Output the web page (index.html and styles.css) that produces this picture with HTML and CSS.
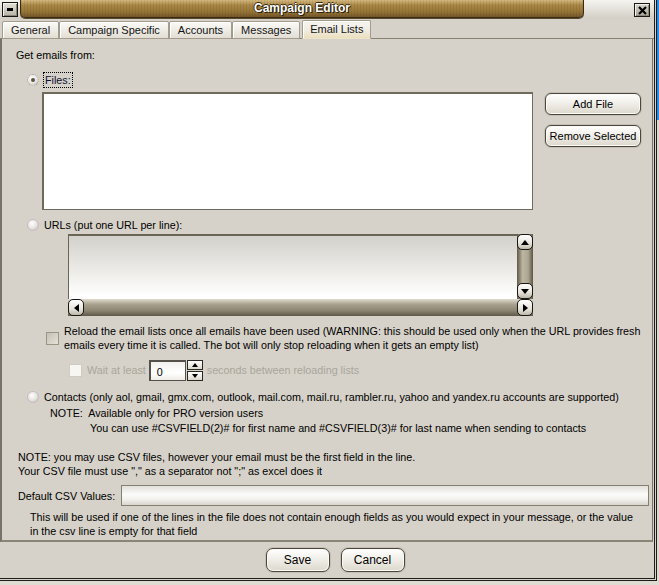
FILE: index.html
```html
<!DOCTYPE html>
<html lang="en">
<head>
    <meta charset="UTF-8">
    <title>Campaign Editor</title>
    <link rel="stylesheet" href="styles.css">
</head>
<body>
<div class="desktop">
    <div class="window">
        <div class="titlebar">
            <div class="sys-btn"><span class="dash"></span></div>
            <div class="caption">Campaign Editor</div>
            <div class="caption-end">
                <div class="close-btn">
                    <svg width="9" height="9" viewBox="0 0 9 9"><path d="M1 1L8 8M8 1L1 8" stroke="#000" stroke-width="2.2"/></svg>
                </div>
            </div>
        </div>

        <div class="tabs">
            <div class="tab">General</div>
            <div class="tab">Campaign Specific</div>
            <div class="tab">Accounts</div>
            <div class="tab">Messages</div>
            <div class="tab active">Email Lists</div>
        </div>

        <div class="panel">
            <div class="get-from">Get emails from:</div>

            <div class="option files-option">
                <span class="radio checked"></span>
                <span class="focus-label">Files:</span>
            </div>

            <div class="files-row">
                <div class="listbox"></div>
                <div class="side-buttons">
                    <button class="btn">Add File</button>
                    <button class="btn">Remove Selected</button>
                </div>
            </div>

            <div class="option urls-option">
                <span class="radio"></span>
                <span>URLs (put one URL per line):</span>
            </div>

            <div class="url-box">
                <div class="url-main">
                    <div class="url-text"></div>
                    <div class="vscroll">
                        <div class="sb-btn"><span class="arrow up"></span></div>
                        <div class="sb-btn"><span class="arrow down"></span></div>
                    </div>
                </div>
                <div class="hscroll">
                    <div class="sb-btn"><span class="arrow left"></span></div>
                    <div class="sb-btn"><span class="arrow right"></span></div>
                </div>
            </div>

            <div class="reload-row">
                <span class="checkbox"></span>
                <p>Reload the email lists once all emails have been used (WARNING: this should be used only when the URL provides fresh<br>emails every time it is called. The bot will only stop reloading when it gets an empty list)</p>
            </div>

            <div class="wait-row">
                <span class="checkbox disabled"></span>
                <span class="muted">Wait at least</span>
                <div class="spin-input">0</div>
                <div class="spin-buttons">
                    <div class="spin-btn"><span class="arrow up small"></span></div>
                    <div class="spin-btn"><span class="arrow down small"></span></div>
                </div>
                <span class="muted">seconds between reloading lists</span>
            </div>

            <div class="option contacts-option">
                <span class="radio"></span>
                <span>Contacts (only aol, gmail, gmx.com, outlook, mail.com, mail.ru, rambler.ru, yahoo and yandex.ru accounts are supported)</span>
            </div>
            <div class="note">NOTE:&nbsp; Available only for PRO version users</div>
            <div class="note-sub">You can use #CSVFIELD(2)# for first name and #CSVFIELD(3)# for last name when sending to contacts</div>

            <div class="csv-note">NOTE: you may use CSV files, however your email must be the first field in the line.<br>Your CSV file must use "," as a separator not ";" as excel does it</div>

            <div class="csv-row">
                <label>Default CSV Values:</label>
                <div class="text-input"></div>
            </div>

            <div class="csv-help">This will be used if one of the lines in the file does not contain enough fields as you would expect in your message, or the value<br>in the csv line is empty for that field</div>
        </div>

        <div class="button-bar">
            <button class="btn">Save</button>
            <button class="btn">Cancel</button>
        </div>
    </div>
    <div class="side-strip"></div>
</div>
</body>
</html>
```

FILE: styles.css
```css
* {
    margin: 0;
    padding: 0;
    box-sizing: border-box;
}

body {
    width: 659px;
    height: 585px;
    overflow: hidden;
    background: #dedbd3;
    font-family: "Liberation Sans", Arial, sans-serif;
    font-size: 10.75px;
    line-height: 14px;
    color: #000;
    white-space: nowrap;
}

.desktop {
    display: flex;
}

.window {
    width: 657px;
    height: 581px;
    background: #d6d2c9;
    border-right: 3px double #1d1c18;
    border-bottom: 3px double #1d1c18;
}

.side-strip {
    width: 2px;
    height: 585px;
    background: linear-gradient(#1d8ff2 0, #1d8ff2 120px, #dedbd3 120px);
}

/* Title bar */
.titlebar {
    height: 19px;
    display: flex;
    background: linear-gradient(#f5f4f0, #d2cec5);
}

.sys-btn {
    width: 16px;
    height: 15px;
    margin: 2px 0 0 2px;
    border: 1px solid #1a1814;
    box-shadow: inset 1px 1px 0 #f4f2ec, inset -1px -1px 0 #8a867c;
    background: linear-gradient(#e4e1d9, #b7b3a8);
    display: flex;
    align-items: center;
    justify-content: center;
}

.sys-btn .dash {
    width: 6px;
    height: 3px;
    background: #000;
}

.caption {
    flex: 1;
    height: 18px;
    margin-left: 2px;
    border: 1px solid #3a2c12;
    border-top: none;
    border-radius: 0 0 5px 5px;
    background:
        repeating-linear-gradient(90deg, rgba(0, 0, 0, 0.07) 0 1px, transparent 1px 3px),
        linear-gradient(#d5b97f 0%, #a98846 30%, #967436 70%, #74572a 100%);
    box-shadow: 0 1px 0 #5a4a2e;
    color: #fff;
    font-weight: bold;
    font-size: 12px;
    line-height: 17px;
    text-align: center;
    text-shadow: 1px 1px 0 #2a1e08, -1px 0 0 #3a2a10, 0 -1px 0 #3a2a10;
}

.caption-end {
    width: 70px;
    display: flex;
    justify-content: flex-end;
    padding: 3px 4px 0 0;
}

.close-btn {
    width: 16px;
    height: 14px;
    border: 1px solid #1a1814;
    box-shadow: inset 1px 1px 0 #f4f2ec, inset -1px -1px 0 #8a867c;
    background: linear-gradient(#d8d5cc, #a9a599);
    display: flex;
    align-items: center;
    justify-content: center;
}

/* Tabs */
.tabs {
    height: 20px;
    display: flex;
    align-items: flex-end;
    padding-left: 2px;
    border-bottom: 1px solid #888272;
}

.tab {
    height: 18px;
    margin-bottom: -1px;
    padding: 0 8px;
    border: 1px solid #a29c8e;
    border-radius: 2px 2px 0 0;
    background: linear-gradient(#fbfaf7, #e2ded4);
    box-shadow: inset 1px 1px 0 #fff;
    font-size: 11px;
    line-height: 16px;
    color: #141414;
}

.tab.active {
    height: 19px;
    margin-left: 2px;
    padding: 0 7px;
    border-bottom-color: #ece3c8;
    background: linear-gradient(#f6f5f0, #efece2 55%, #ebdfbd);
    line-height: 17px;
}

/* Panel */
.panel {
    width: 653px;
    height: 503px;
    border-left: 2px solid #77736a;
    border-right: 1px solid #77736a;
    border-bottom: 2px solid #8a8577;
    padding-top: 9px;
}

.get-from {
    padding-left: 14px;
}

.option {
    display: flex;
    align-items: center;
    gap: 5px;
    padding-left: 25px;
    height: 14px;
}

.files-option {
    margin-top: 11px;
}

.radio {
    width: 12px;
    height: 12px;
    border-radius: 50%;
    border: 1px solid #c8b9c8;
    background: radial-gradient(circle at 40% 35%, #ffffff, #e6e3dc 55%, #b9b5ab);
    display: inline-flex;
    align-items: center;
    justify-content: center;
}

.radio.checked {
    border: 1px dotted #a59f8f;
}

.radio.checked::after {
    content: "";
    width: 4px;
    height: 4px;
    border-radius: 50%;
    background: #5a554a;
}

.focus-label {
    outline: 1px dotted #000;
    outline-offset: 0;
    padding: 0 1px;
    color: #0c1030;
}

.files-row {
    display: flex;
    margin-top: 5px;
    padding-left: 40px;
}

.listbox {
    width: 491px;
    height: 118px;
    background: #fff;
    border: 1px solid #6f6a5e;
    border-width: 2px 1px 1px 2px;
}

.side-buttons {
    display: flex;
    flex-direction: column;
    gap: 10px;
    margin: 1px 0 0 12px;
}

.btn {
    font-family: inherit;
    font-size: 11px;
    color: #000;
    height: 22px;
    width: 96px;
    border: 1px solid #4b473e;
    border-radius: 6px;
    background: linear-gradient(#ffffff, #f1efe9 45%, #dcd8cd 100%);
    box-shadow: inset 0 0 0 1px #fbfaf6, 0 0 0 1px #c4bfb2;
}

.urls-option {
    margin-top: 8px;
}

.url-box {
    width: 465px;
    height: 82px;
    margin: 2px 0 0 66px;
    display: flex;
    flex-direction: column;
}

.url-main {
    flex: 1;
    display: flex;
}

.url-text {
    flex: 1;
    border-top: 2px solid #6b6555;
    border-left: 1px solid #6b6555;
    background: linear-gradient(#d3d1cb, #ecebe7 55%, #ffffff 95%);
}

.vscroll {
    width: 16px;
    display: flex;
    flex-direction: column;
    justify-content: space-between;
    background: linear-gradient(90deg, #5e5746, #bcb6a2 35%, #aca590 70%, #5b5443);
}

.hscroll {
    height: 17px;
    display: flex;
    justify-content: space-between;
    background: linear-gradient(#e0dccf, #aaa390 30%, #8a8370 70%, #5f5848);
}

.sb-btn {
    width: 16px;
    height: 16px;
    border: 1px solid #1a1814;
    border-radius: 5px;
    background: linear-gradient(#ffffff, #e6e3da 60%, #bdb8ab);
    display: flex;
    align-items: center;
    justify-content: center;
}

.hscroll .sb-btn {
    height: 17px;
}

.arrow {
    width: 0;
    height: 0;
    border: 4px solid transparent;
}

.arrow.up {
    border-bottom: 5px solid #000;
    border-top-width: 0;
}

.arrow.down {
    border-top: 5px solid #000;
    border-bottom-width: 0;
}

.arrow.left {
    border-right: 5px solid #000;
    border-left-width: 0;
}

.arrow.right {
    border-left: 5px solid #000;
    border-right-width: 0;
}

.arrow.small {
    border-width: 3px;
}

.arrow.small.up {
    border-bottom-width: 4px;
    border-top-width: 0;
}

.arrow.small.down {
    border-top-width: 4px;
    border-bottom-width: 0;
}

.reload-row {
    display: flex;
    align-items: center;
    gap: 5px;
    margin-top: 8px;
    padding-left: 44px;
}

.checkbox {
    width: 13px;
    height: 13px;
    flex-shrink: 0;
    border: 1px solid #9c9485;
    background: linear-gradient(135deg, #c4c0b6, #e6e2da);
}

.checkbox.disabled {
    border-color: #cfcbc2;
    background: #f7f6f2;
}

.wait-row {
    display: flex;
    align-items: center;
    height: 20px;
    margin-top: 8px;
    padding-left: 67px;
}

.wait-row .checkbox {
    margin-right: 5px;
}

.muted {
    color: #a9a59c;
}

.spin-input {
    width: 37px;
    height: 21px;
    margin-left: 3px;
    padding: 3px 0 0 6px;
    border: 1px solid #55514a;
    border-width: 2px 1px 1px 2px;
    background: linear-gradient(#f2f1ee, #ffffff 60%, #eeece6);
}

.spin-buttons {
    display: flex;
    flex-direction: column;
    gap: 1px;
    margin: 0 4px 0 1px;
}

.spin-btn {
    width: 16px;
    height: 10px;
    border: 1px solid #2a2822;
    background: linear-gradient(#ffffff, #dcd8ce);
    display: flex;
    align-items: center;
    justify-content: center;
}

.contacts-option {
    margin-top: 10px;
}

.note {
    margin-top: 2px;
    padding-left: 48px;
}

.note-sub {
    margin-top: 1px;
    padding-left: 88px;
}

.csv-note {
    margin-top: 15px;
    padding-left: 16px;
}

.csv-row {
    display: flex;
    align-items: center;
    margin-top: 7px;
    padding-left: 16px;
}

.csv-row label {
    width: 103px;
}

.text-input {
    width: 528px;
    height: 21px;
    border: 1px solid #857f71;
    background: linear-gradient(#e2e0da, #fbfbfa 45%, #f2f1ed 70%, #d8d5cd);
}

.csv-help {
    margin-top: 4px;
    padding-left: 28px;
}

/* Bottom buttons */
.button-bar {
    height: 33px;
    display: flex;
    justify-content: center;
    align-items: center;
    gap: 11px;
    padding: 2px 0 0 16px;
}

.button-bar .btn {
    width: 64px;
    height: 24px;
    border-radius: 7px;
    font-size: 12px;
}
```
